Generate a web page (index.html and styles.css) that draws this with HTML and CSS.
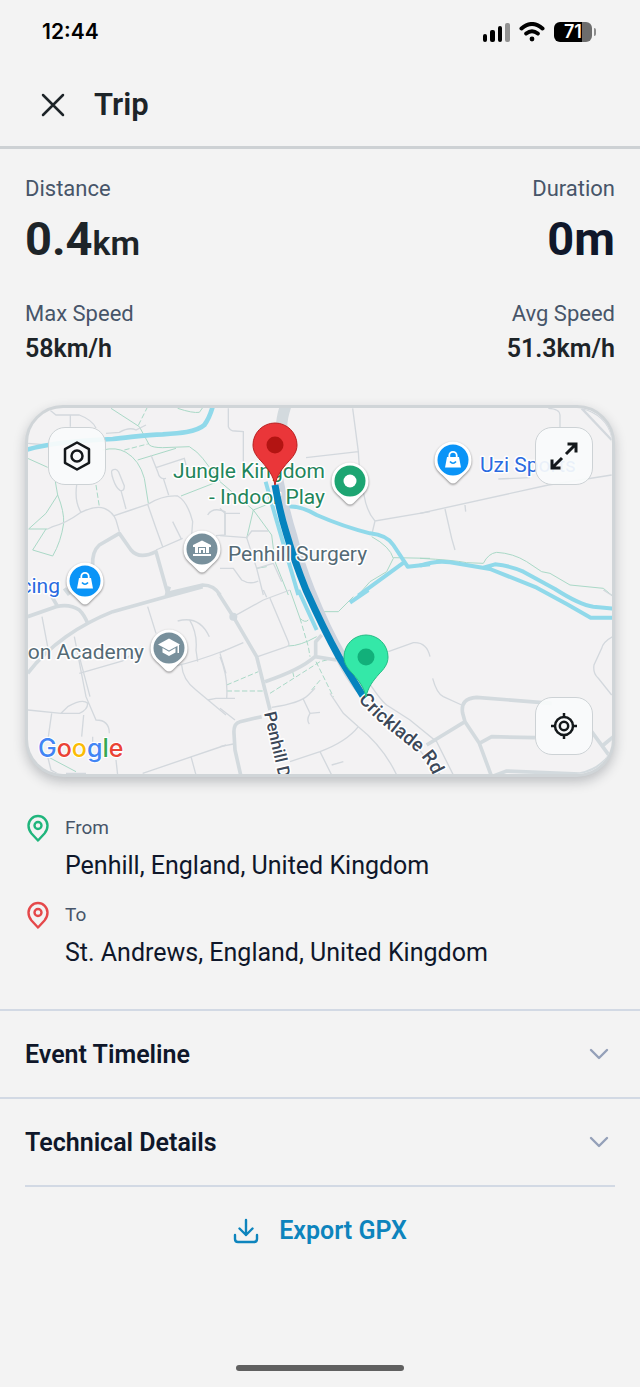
FILE: index.html
```html
<!DOCTYPE html>
<html lang="en">
<head>
<meta charset="utf-8">
<meta name="viewport" content="width=device-width, initial-scale=1">
<title>Trip</title>
<link rel="stylesheet" href="styles.css">
</head>
<body>
<div class="screen">
  <div class="status">
    <time class="clock">12:44</time>
    <div class="status-icons">
      <svg width="28" height="20" viewBox="0 0 28 20" aria-hidden="true">
        <rect x="1" y="12" width="4" height="8" rx="2"/><rect x="8" y="8" width="5" height="12" rx="2"/><rect x="16" y="4" width="4" height="16" rx="2"/><rect x="23" y="1" width="5" height="19" rx="2" fill="#929292"/>
      </svg>
      <svg width="26" height="20" viewBox="0 0 26 20" fill="none" stroke="#000" stroke-width="4" stroke-linecap="round" aria-hidden="true">
        <path d="M2.500 6.500Q13-2.500 23.500 6.500M7.200 11.500Q13 7 18.800 11.500"/><circle cx="13" cy="17" r="2.400" fill="#000" stroke="none"/>
      </svg>
      <div class="battery"><span class="cell">71</span><span class="nub"></span></div>
    </div>
  </div>

  <header class="header">
    <button class="close" aria-label="Close">
      <svg width="24" height="24" viewBox="0 0 24 24" fill="none" stroke="#1d2428" stroke-width="2.500" stroke-linecap="round"><path d="M2 2l20 20M22 2L2 22"/></svg>
    </button>
    <h1 class="title">Trip</h1>
  </header>

  <main class="main">
    <dl class="stats">
      <div class="stat"><dt>Distance</dt><dd class="big">0.4<span class="unit">km</span></dd></div>
      <div class="stat end"><dt>Duration</dt><dd class="big navy">0m</dd></div>
      <div class="stat"><dt>Max Speed</dt><dd class="small">58km/h</dd></div>
      <div class="stat end"><dt>Avg Speed</dt><dd class="small">51.3km/h</dd></div>
    </dl>

    <section class="map" aria-label="Route map">
      <svg class="map-art" viewBox="0 0 584 366" preserveAspectRatio="xMidYMid slice">
        <defs>
          <path id="poi" d="M-18.500 0a18.500 18.500 0 0 1 37 0c0 8-4 11.500-8 15l-7 7q-3.500 3-7 0l-7-7c-4-3.500-8-7-8-15z"/>
          <path id="drop" d="M0 40C-2 30-7 24-13 17C-18 12-22 7-22 0a22 22 0 0 1 44 0C22 7 18 12 13 17C7 24 2 30 0 40z"/>
          <g id="bag"><path d="M-6-3H6L8 7.500H-8z" fill="#fff"/><path d="M-3.700-3v-1.500a3.700 3.700 0 0 1 7.400 0V-3" fill="none" stroke="#fff" stroke-width="1.800"/><path d="M-3 1.500q3 3.500 6 0" fill="none" stroke="#0a94f7" stroke-width="1.600"/></g>
          <path id="cricklade" d="M330 292Q344 308 360 321L385 341Q397 351 403 363L412 380"/>
        </defs>

        <!-- north-west -->
        <g transform="translate(-12 -13) scale(.33333)">
          <g class="trail"><path d="M285 40L370 95L400 150Q410 158 440 158L520 155Q545 170 560 190L612 258M485 40Q530 55 550 52L560 38M260 165Q300 155 330 172Q370 195 385 250L397 325M365 195L480 160M35 190L95 217M118 260L125 300Q145 350 143 385Q135 440 110 483L50 465M125 300L90 355L38 402H95M90 402L50 465M495 303L600 262"/><path class="dash" d="M395 35L365 95M325 165L395 147M240 270L250 335"/></g>
          <g class="lane"><path d="M95 40L120 60H190Q230 75 240 100M163 62V95M270 115L310 112Q340 95 360 105L390 90M35 145L95 150M182 270Q175 320 195 352M95 402L110 395Q150 385 195 352Q240 330 265 340Q290 350 300 375L310 410M295 362L345 345L395 328Q440 300 485 303Q515 320 530 380L527 420M395 328L420 400L440 455M288 226q12-8 20 5l17 42q0 18-13 13q-12-8-20-32q-8-22-4-28M315 287L330 342M405 180L425 230Q430 255 450 250M420 218L505 190L510 210M442 250L458 300M470 380L495 430M420 465L500 430M575 360Q590 335 627 350V420L600 422"/></g>
          <path class="road" d="M230 510Q228 470 250 450L310 415L345 465Q370 495 420 470L455 595L560 570Q595 570 612 600M145 580L160 600"/>
          <path class="water wide" d="M30 165Q110 140 290 132C340 128 390 118 440 118C490 115 540 112 565 90Q580 70 590 35"/>
        </g>

        <!-- north -->
        <g transform="translate(192 -13) scale(.33333)">
          <g class="trail"><path d="M0 260L100 345L150 325M100 345L80 430M100 345L155 420L165 500L205 600M455 425Q510 455 520 490L500 530L450 560L415 600M520 488L630 490M110 520L140 515"/></g>
          <g class="lane"><path d="M25 40V95Q30 108 45 108L70 110V210M398 40L415 170Q420 260 432 300Q440 350 465 378L630 350M465 378L455 420M258 188L415 170M0 340L15 355H60M15 355V420M0 422L80 428L95 408H145M80 428L110 520L130 600M0 520H40L65 555Q90 570 115 558M110 520L160 505L185 560"/></g>
          <path class="road main-road" d="M185 110Q182 75 198 30"/>
          <path class="water" d="M137 260L165 360L235 600M200 335Q240 330 290 360Q370 395 450 415Q500 420 520 450L563 515L630 508M555 500L415 602"/>
        </g>

        <!-- north-east -->
        <g transform="translate(392 -13) scale(.33333)">
          <path class="trail" d="M0 490Q100 495 140 503L190 505Q205 475 230 472Q280 475 320 500L365 530L390 535L450 570L550 580L580 605"/>
          <path class="lane" d="M0 355L385 270L575 240M75 342L95 430L105 465M135 330L137 350M235 252L330 248M385 40Q420 42 420 60V96M485 40Q560 60 575 125"/>
          <path class="lane mid" d="M485 40L575 135"/>
          <path class="water" d="M0 512Q50 495 90 502L210 522L350 578L440 627L512 668H585M190 518L225 508Q270 512 310 530L405 582Q480 630 520 635L585 641"/>
        </g>

        <!-- south-west -->
        <g transform="translate(-12 182) scale(.33333)">
          <path class="trail" d="M95 500L180 545"/>
          <g class="lane"><path d="M78 80L95 170M395 50L420 130M485 93Q550 75 580 140M520 88Q545 130 540 180L545 215M470 230Q540 215 630 180M497 225Q500 270 540 300L630 375M575 330L600 325H630M612 190L630 250M175 140L210 320L240 390Q280 390 280 430M190 200L222 320M190 250L320 213L380 170M35 360L135 370H190Q215 360 215 340Q200 325 155 350L135 370M107 370L97 440M203 375L197 440M230 440V455M95 500L105 540L140 560M300 510L305 555M525 500L540 555M380 550L630 465M150 550H210"/></g>
          <path class="road" d="M35 80L120 50Q160 40 190 60Q205 75 215 100M105 15L125 50M35 250Q80 190 150 140Q215 95 290 65L450 20L560-10M450 20L460-10"/>
        </g>

        <!-- south -->
        <g transform="translate(192 182) scale(.33333)">
          <g class="trail"><path d="M210 0L240 85Q255 100 265 90M205 168Q240 168 290 140M300 65H355L400 20"/><path class="dash" d="M240 85L265 170L270 200M20 285L115 245M20 303H130M150 310L300 215L340 205M218 245L222 262M288 215L340 320M275 300L305 265"/></g>
          <g class="lane"><path d="M40 80L130 30L210 0M150 25L205 155Q210 168 200 170L113 200M0 188L70 158M0 200Q25 260 20 325H45M130 0L140 22M155 352Q240 340 265 315L285 295M250 328L270 370L300 367M270 370Q258 390 268 402M210 515L300 485Q380 455 415 410M300 485L335 555M335 525L370 515M330 310L370 370L415 410Q490 470 530 555M505 185L580 158Q620 155 630 200M0 355L45 390M0 470L40 462"/></g>
          <path class="road" d="M-5 10L40 80L110 200L150 360M135 275Q240 240 285 200L350 210M287 200V155L305 135M125 380L60 395Q40 400 42 430L45 480L62 555"/>
          <circle cx="40" cy="80" r="12" fill="#d1d9de"/>
          <path class="lane" d="M350 210Q375 260 410 305M435 260Q480 330 500 345L570 390L650 455L700 555M590 470L640 530L665 560"/>
          <path class="water" d="M235 0L290 120M390 38L445 0"/>
        </g>

        <!-- south-east -->
        <g transform="translate(392 182) scale(.33333)">
          <path class="lane" d="M38 265Q50 310 70 320L125 345M578 140Q550 155 545 175L522 225Q518 250 535 265L575 315M550 0L578 18"/>
          <path class="road" d="M395 340L170 322Q120 325 128 370L135 395L178 460L215 560M135 395L20 465M178 460L215 440L345 443M215 560L260 543L480 552Q540 540 575 490M515 425L570 500M550 465L580 440"/>
        </g>

        <path d="M250 70Q257 105 264 127Q270 152 282 182Q298 222 314 249L336 285" fill="none" stroke="#cdd4de" stroke-width="10"/>
        <g class="label">
          <text class="green" x="297" y="70" text-anchor="end">Jungle Kingdom</text>
          <text class="green" x="297" y="96" text-anchor="end">- Indoor Play</text>
        </g>
        <path d="M247 77Q252 105 258 124Q266 152 278 182Q296 222 311 249L335 288" fill="none" stroke="#0583be" stroke-width="7"/>

        <g class="label">
          <text class="slate" x="200" y="153">Penhill Surgery</text>
          <text class="slate" x="116" y="251" text-anchor="end">on Academy</text>
          <text class="blue" x="452" y="64">Uzi Sports</text>
          <text class="blue" x="32" y="185" text-anchor="end">cing</text>
        </g>
        <g class="street">
          <text transform="translate(236 305) rotate(77)">Penhill Dr</text>
          <text class="long"><textPath href="#cricklade">Cricklade Rd</textPath></text>
        </g>

        <g class="pin" transform="translate(174 141)"><use href="#poi"/><circle r="15.500" fill="#78909c"/><path d="M0-8.500L9-4v2H-9v-2zM-7-2h3v6h-3zM4-2h3v6H4zM-9 5H9v2H-9zM-3 4v-5h6v5h-2V1h-2v3z" fill="#fff"/></g>
        <g class="pin" transform="translate(57 173)"><use href="#poi"/><circle r="15.500" fill="#0a94f7"/><use href="#bag"/></g>
        <g class="pin" transform="translate(141 240)"><use href="#poi"/><circle r="15.500" fill="#78909c"/><path d="M0-9.500L11-3.500L0 2.500L-11-3.500z" fill="#fff"/><path d="M-6.500 0v4.500L0 8l6.500-3.500V0L0 3.800zM8.500-3h1.500v8H8.500z" fill="#fff"/></g>
        <g class="pin" transform="translate(322 73)"><use href="#poi"/><circle r="15.500" fill="#1da572"/><circle r="6.500" fill="#fff"/></g>
        <g class="pin" transform="translate(425 52)"><use href="#poi"/><circle r="15.500" fill="#0a94f7"/><use href="#bag"/></g>

        <g transform="translate(247 37)"><use href="#drop" fill="#ea3639" stroke="#b92020"/><circle r="8.500" fill="#b31412"/></g>
        <g transform="translate(338 249)"><use href="#drop" fill="#34e8a8" stroke="#22bd84"/><circle r="8.500" fill="#12b07a"/></g>

        <text class="google" x="10" y="349"><tspan fill="#4285f4">G</tspan><tspan fill="#ea4335">o</tspan><tspan fill="#fbbc05">o</tspan><tspan fill="#4285f4">g</tspan><tspan fill="#34a853">l</tspan><tspan fill="#ea4335">e</tspan></text>
      </svg>

      <button class="map-btn top left" aria-label="Map type">
        <svg width="32" height="32" viewBox="0 0 32 32"><path d="M16 2.500L28 9.200V22.800L16 29.500L4 22.800V9.200z"/><circle cx="16" cy="16" r="5.500"/></svg>
      </button>
      <button class="map-btn top right" aria-label="Expand map">
        <svg width="32" height="32" viewBox="0 0 32 32"><path class="bold" d="M18 14L28 4M19.500 4H28v8.500M14 18L4 28M4 19.500V28h8.500"/></svg>
      </button>
      <button class="map-btn bottom right" aria-label="Centre map">
        <svg width="32" height="32" viewBox="0 0 32 32"><circle cx="16" cy="16" r="9"/><circle cx="16" cy="16" r="4.200"/><path d="M16 3v4M16 25v4M3 16h4M25 16h4"/></svg>
      </button>
    </section>

    <dl class="places">
      <div class="place from">
        <svg width="26" height="30" viewBox="0 0 26 30" aria-hidden="true"><path d="M13 27.500L6.500 20.500Q3.500 17 3.500 12.500a9.500 9.500 0 0 1 19 0Q22.500 17 19.500 20.500z"/><circle cx="13" cy="12.500" r="3.500"/></svg>
        <dt>From</dt><dd>Penhill, England, United Kingdom</dd>
      </div>
      <div class="place to">
        <svg width="26" height="30" viewBox="0 0 26 30" aria-hidden="true"><path d="M13 27.500L6.500 20.500Q3.500 17 3.500 12.500a9.500 9.500 0 0 1 19 0Q22.500 17 19.500 20.500z"/><circle cx="13" cy="12.500" r="3.500"/></svg>
        <dt>To</dt><dd>St. Andrews, England, United Kingdom</dd>
      </div>
    </dl>
  </main>

  <button class="row" aria-expanded="false">Event Timeline
    <svg width="20" height="12" viewBox="0 0 20 12" aria-hidden="true"><path d="M2 2l8 8 8-8"/></svg>
  </button>
  <button class="row" aria-expanded="false">Technical Details
    <svg width="20" height="12" viewBox="0 0 20 12" aria-hidden="true"><path d="M2 2l8 8 8-8"/></svg>
  </button>
  <div class="export-wrap">
    <button class="export">
      <svg width="26" height="26" viewBox="0 0 26 26" aria-hidden="true"><path d="M13 2v15M6.500 10.500L13 17l6.500-6.500M2 17v4q0 3 3 3h16q3 0 3-3v-4"/></svg>
      Export GPX
    </button>
  </div>
  <div class="home"></div>
</div>
</body>
</html>
```
FILE: styles.css
```css
* { box-sizing: border-box; }

body {
  margin: 0;
  background: #f3f3f3;
  color: #0f172a;
  font-family: Roboto, "Liberation Sans", sans-serif;
}

h1, dl, dd { margin: 0; }

button {
  border: 0;
  padding: 0;
  background: none;
  color: inherit;
  font: inherit;
  cursor: pointer;
}

svg { display: block; flex: none; }

.screen {
  display: flex;
  flex-direction: column;
  min-height: 100vh;
}

/* Status bar */
.status {
  display: flex;
  align-items: center;
  justify-content: space-between;
  height: 64px;
  padding: 0 44px 0 42px;
  color: #000;
}

.clock { font: 600 21px/26px Inter, sans-serif; }

.status-icons { display: flex; align-items: center; gap: 9px; }

.battery { display: flex; align-items: center; gap: 2px; }

.cell {
  display: flex;
  align-items: center;
  justify-content: center;
  width: 38px;
  height: 20px;
  border-radius: 6px;
  background: linear-gradient(90deg, #000 74%, #6d6d6d 74%);
  color: #fff;
  font: 600 18px/20px Inter, sans-serif;
}

.nub {
  width: 2px;
  height: 8px;
  border-radius: 0 2px 2px 0;
  background: #8c8c8c;
}

/* Header */
.header {
  display: flex;
  align-items: center;
  gap: 29px;
  height: 85px;
  padding: 0 41px;
  border-bottom: 3px solid #cdd1d4;
}

.title {
  color: #1d2428;
  font-size: 31px;
  font-weight: 600;
  line-height: 36px;
}

.main { padding: 26px 25px 38px; }

/* Trip figures */
.stats {
  display: grid;
  grid-template-columns: 1fr 1fr;
  row-gap: 29px;
  color: #1d2428;
}

.end { text-align: right; }

.stat dt {
  color: #475569;
  font-size: 22px;
  line-height: 28px;
}

.big {
  padding-top: 8px;
  font-size: 47px;
  font-weight: 700;
  line-height: 56px;
}

.unit { font-size: 34px; font-weight: 600; }

.navy { color: #0f172a; }

.small {
  padding-top: 5px;
  font-size: 25px;
  font-weight: 600;
  line-height: 32px;
}

/* Map */
.map {
  position: relative;
  margin-top: 40px;
  overflow: hidden;
  border: 3px solid #d0d5d8;
  border-radius: 38px;
  background: #f3f2f3;
  box-shadow: 0 5px 12px rgba(30, 40, 50, 0.25);
}

.map-art { width: 100%; height: auto; }

.lane { fill: none; stroke: #d3d8dd; stroke-width: 4; }
.mid { stroke-width: 7; }
.road { fill: none; stroke: #d3dade; stroke-width: 11; stroke-linejoin: round; }
.main-road { stroke-width: 34; }
.trail { fill: none; stroke: #a9d8c6; stroke-width: 3; }
.dash { stroke-dasharray: 16 7; }
.water { fill: none; stroke: #90d9ea; stroke-width: 12; stroke-linejoin: round; }
.wide { stroke-width: 14; }

.label, .street {
  paint-order: stroke;
  stroke: #fff;
  stroke-width: 3px;
  stroke-linejoin: round;
}

.label { font-size: 21px; }
.street { fill: #3c4858; font-size: 17px; font-weight: 500; }
.long { font-size: 19px; }
.green { fill: #1f855b; }
.slate { fill: #546a75; }
.blue { fill: #2a6be0; }

.pin { fill: #fff; filter: drop-shadow(0 1px 1px rgba(0, 0, 0, 0.45)); }

.google {
  font: 500 25px Inter, sans-serif;
  paint-order: stroke;
  stroke: #fff;
  stroke-width: 2px;
}

.map-btn {
  position: absolute;
  display: flex;
  align-items: center;
  justify-content: center;
  width: 58px;
  height: 58px;
  border: 1px solid #cdd2d5;
  border-radius: 17px;
  background: rgba(249, 251, 251, 0.93);
}

.top { top: 19px; }
.bottom { bottom: 19px; }
.left { left: 20px; }
.right { right: 19px; }

.map-btn svg { fill: none; stroke: #14181b; stroke-width: 2.5; stroke-linejoin: round; }
.map-btn .bold { stroke-width: 3; stroke-linejoin: miter; }

/* Start and end places */
.places {
  display: grid;
  gap: 16px;
  padding-top: 36px;
}

.place {
  display: grid;
  grid-template-columns: 26px 1fr;
  column-gap: 14px;
  row-gap: 5px;
}

.place svg { fill: none; stroke-width: 2.4; stroke-linejoin: round; }
.from svg { stroke: #1fb57c; }
.to svg { stroke: #e5484a; }

.place dt {
  color: #475569;
  font-size: 19px;
  line-height: 30px;
}

.place dd {
  grid-column: 2;
  font-size: 25px;
  line-height: 36px;
}

/* Expandable rows */
.row {
  display: flex;
  align-items: center;
  justify-content: space-between;
  height: 88px;
  padding: 0 31px 0 25px;
  border-top: 2px solid #d2d9e4;
  font-size: 25px;
  font-weight: 600;
  text-align: left;
}

.row svg {
  fill: none;
  stroke: #94a0b8;
  stroke-width: 2.4;
  stroke-linecap: round;
  stroke-linejoin: round;
}

.export-wrap {
  display: flex;
  justify-content: center;
  margin: 0 25px;
  padding-top: 26px;
  border-top: 2px solid #d2d9e4;
}

.export {
  display: flex;
  align-items: center;
  gap: 20px;
  color: #0d84bd;
  font-size: 25px;
  font-weight: 600;
  line-height: 36px;
}

.export svg {
  fill: none;
  stroke: #0d84bd;
  stroke-width: 2.4;
  stroke-linecap: round;
  stroke-linejoin: round;
}

.home {
  align-self: center;
  width: 168px;
  height: 6px;
  margin: auto 0 16px;
  border-radius: 3px;
  background: #606060;
}
```
